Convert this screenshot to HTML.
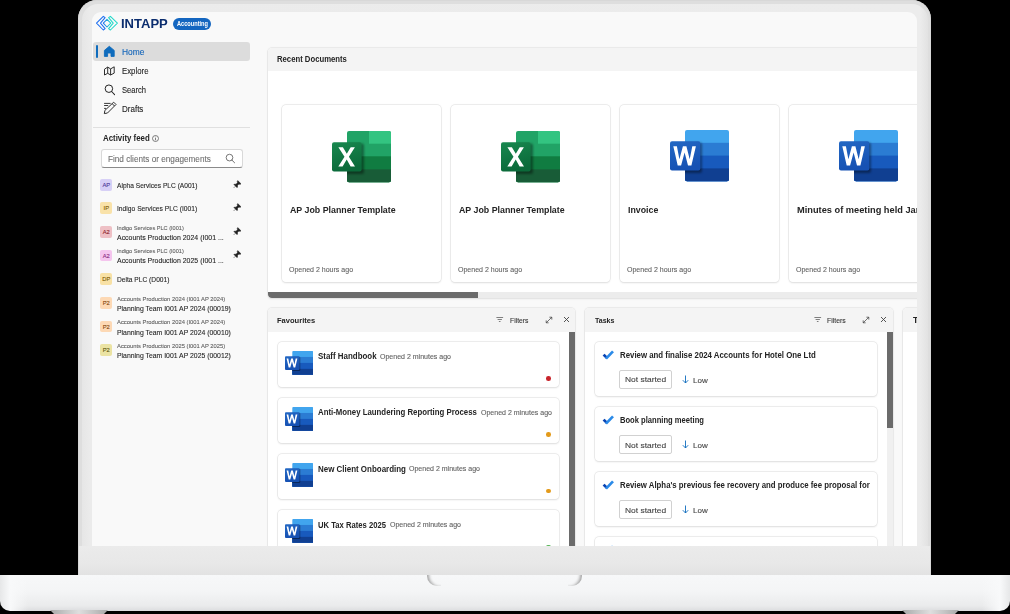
<!DOCTYPE html>
<html><head><meta charset="utf-8">
<style>
*{box-sizing:border-box;margin:0;padding:0}
html,body{width:1010px;height:614px;overflow:hidden;background:#000}
body{position:relative;font-family:"Liberation Sans",sans-serif}
.a{position:absolute}
.t{position:absolute;white-space:nowrap;line-height:20px;height:20px;transform-origin:0 0}
#lid{left:78px;top:0px;width:853px;height:575px;border-radius:19px 19px 0 0;background:#dedede;box-shadow:inset 0 0 0 1px #d8d8d8}
#lidin{left:81.5px;top:3.5px;width:846px;height:571.5px;border-radius:16px 16px 0 0;background:linear-gradient(90deg,#e6e6e6,#ebebeb 8px,#ececec 838px,#e2e2e2 846px)}
#chin{left:79px;top:546px;width:851px;height:29px;background:linear-gradient(#ebebeb,#e8e8e8 60%,#e2e2e2)}
#screen{left:92px;top:12px;width:825px;height:534px;border-radius:9px 9px 0 0;overflow:hidden;background:#f9f9f9}
#s{position:absolute;left:-92px;top:-12px;width:1010px;height:614px}
#base{left:0;top:575px;width:1010px;height:35.5px;border-radius:0 0 10px 10px;background:linear-gradient(90deg,#e6e7e8 0px,#f8f9fa 10px,rgba(248,249,250,0) 28px,rgba(248,249,250,0) 982px,#f8f9fa 1000px,#e6e7e8 1010px),linear-gradient(#f7f8f9 0%,#f4f5f6 45%,#eaebec 85%,#dcdddf 100%)}
#baseL{display:none}
#notch{left:427px;top:575px;width:14px;height:11px;border-radius:0 0 0 10px;box-shadow:inset 4px -1px 3px -2px #a8a8a8}
#notch2{left:568px;top:575px;width:14px;height:11px;border-radius:0 0 10px 0;box-shadow:inset -4px -1px 3px -2px #a8a8a8}
.foot{top:610px;height:4px;background:linear-gradient(90deg,#a8a8a8,#c4c4c4 25%,#dedede 50%,#c4c4c4 75%,#a8a8a8);clip-path:polygon(0 0,100% 0,calc(100% - 4px) 100%,4px 100%)}
.panel{position:absolute;background:#fff;border-radius:4px;box-shadow:0 0 0 0.6px #e2e2e2,0 0.5px 2px rgba(0,0,0,.1);overflow:hidden}
.ph{position:absolute;left:0;top:0;right:0;background:#f4f4f4}
.card{position:absolute;background:#fff;border-radius:4px;box-shadow:0 0 0 0.6px #e2e2e2,0 0.6px 2px rgba(0,0,0,.13)}
.sb{position:absolute;background:#6b6b6b}
.av{position:absolute;left:100.4px;width:11.8px;height:11.8px;border-radius:2px;font-size:5.8px;line-height:13.6px;text-align:center;letter-spacing:-0.05px;font-weight:400;-webkit-text-stroke:0.1px currentColor}
.pill{position:absolute;left:619.4px;width:52.6px;height:18.4px;border:1px solid #d1d1d1;border-radius:2px;background:#fff}
</style></head><body>
<div id="lid" class="a"></div>
<div id="lidin" class="a"></div>
<div id="chin" class="a"></div>
<div id="base" class="a"></div>
<div id="baseL" class="a"></div>
<div id="notch" class="a"></div><div id="notch2" class="a"></div>
<div class="a foot" style="left:50px;width:58px"></div>
<div class="a foot" style="left:902px;width:57px"></div>

<div id="screen" class="a"><div id="s">
<!-- logo -->
<svg class="a" style="left:94px;top:14px" width="26" height="19" viewBox="0 0 26 19">
<defs><linearGradient id="lg2" x1="0" y1="0" x2="1" y2="0"><stop offset="0" stop-color="#1f6ff0"/><stop offset="1" stop-color="#22e0c8"/></linearGradient></defs>
<path d="M9.3 2.3 L2.5 9.1 L9.3 16 L11.1 14.6 L6.5 9.1 L11.1 3.7 Z" fill="none" stroke="#1f6ff0" stroke-width="1.05" stroke-linejoin="round"/>
<path d="M16.4 2.3 L23.4 9.1 L16.4 16 L14.6 14.6 L19.2 9.1 L14.6 3.7 Z" fill="none" stroke="#22d8c8" stroke-width="1.05" stroke-linejoin="round"/>
<path d="M13 5.4 L16.8 9.2 L13 13 L9.3 9.2 Z" fill="none" stroke="url(#lg2)" stroke-width="1.05" stroke-linejoin="round"/>
</svg>
<div class="a" style="left:172.9px;top:18px;width:38px;height:11.6px;border-radius:6px;background:#1466c0"></div>
<!-- nav -->
<div class="a" style="left:93.2px;top:42.4px;width:156.7px;height:18.2px;border-radius:3px;background:#dcdcdc"></div>
<div class="a" style="left:95.9px;top:44.8px;width:2.1px;height:13.7px;border-radius:1px;background:#0f6cbd"></div>
<svg class="a" style="left:103px;top:45px" width="13" height="13" viewBox="0 0 13 13"><path d="M6.3 1.3 L11.2 5.4 V11.4 H8 V8 H4.6 V11.4 H1.4 V5.4 Z" fill="#0f6cbd" stroke="#0f6cbd" stroke-width="0.9" stroke-linejoin="round"/></svg>
<svg class="a" style="left:102.6px;top:65.5px" width="13" height="11" viewBox="0 0 13 11"><path d="M1.5 3.2 L4.7 1.1 L7.6 2.9 L11.2 0.8 V7.1 L7.6 9 L4.7 7.3 L1.5 9 Z M4.7 1.1 V7.3 M7.6 2.9 V9" fill="none" stroke="#242424" stroke-width="0.95" stroke-linejoin="round"/></svg>
<svg class="a" style="left:103.5px;top:83.5px" width="12" height="12" viewBox="0 0 12 12"><circle cx="4.9" cy="4.7" r="3.75" fill="none" stroke="#242424" stroke-width="1"/><path d="M7.6 7.5 L10.6 10.6" stroke="#242424" stroke-width="1.05" stroke-linecap="round"/></svg>
<svg class="a" style="left:103px;top:101px" width="14" height="14" viewBox="0 0 14 14"><path d="M1.1 2.4 H7.6 M1.1 4.5 H5.2 M1.1 7.4 H3" stroke="#242424" stroke-width="0.9"/><path d="M10.7 1.2 L13 3.5 L4.5 12 L1.3 12.6 L1.9 9.4 Z M9.2 2.7 L11.5 5" fill="none" stroke="#242424" stroke-width="0.95" stroke-linejoin="round"/></svg>
<div class="a" style="left:93.3px;top:127px;width:156.4px;height:1px;background:#e0e0e0"></div>
<svg class="a" style="left:152.3px;top:134.9px" width="7" height="7" viewBox="0 0 7 7"><circle cx="3.5" cy="3.5" r="3" fill="none" stroke="#555" stroke-width="0.75"/><path d="M3.5 3 V5.3" stroke="#555" stroke-width="0.75"/><circle cx="3.5" cy="2.0" r="0.45" fill="#555"/></svg>
<!-- search box -->
<div class="a" style="left:100.7px;top:149px;width:142.2px;height:18.8px;background:#fff;border:1px solid #d9d9d9;border-bottom:1.2px solid #8a8a8a;border-radius:3px"></div>
<svg class="a" style="left:225px;top:153px" width="11" height="11" viewBox="0 0 11 11"><circle cx="4.5" cy="4.6" r="3.35" fill="none" stroke="#555" stroke-width="0.8"/><path d="M6.9 7.1 L9.6 9.8" stroke="#555" stroke-width="0.85" stroke-linecap="round"/></svg>
<!-- avatars -->
<div class="av" style="top:178.8px;background:#d7d0f6;color:#4b3796">AP</div>
<div class="av" style="top:202.3px;background:#f9e2a9;color:#7d5a00">IP</div>
<div class="av" style="top:226.2px;background:#eec0c5;color:#8e1f2b">A2</div>
<div class="av" style="top:249.7px;background:#f5c5ee;color:#8a2a7e">A2</div>
<div class="av" style="top:273.2px;background:#f8e1a5;color:#7d5a00">DP</div>
<div class="av" style="top:297.2px;background:#fdd9b5;color:#87480c">P2</div>
<div class="av" style="top:320.5px;background:#fdd9b5;color:#87480c">P2</div>
<div class="av" style="top:344px;background:#ebe3a3;color:#5f5a12">P2</div>
<!-- pins -->
<svg class="a pin" style="left:232.9px;top:179.6px" width="8.6" height="8.6" viewBox="0 0 9 9"><path d="M5 0.6 L8.4 4 L7.4 4.6 L6.2 4.3 L4.6 5.9 L4.8 7.4 L4.2 8 L1 4.8 L1.6 4.2 L3.1 4.4 L4.7 2.8 L4.4 1.6 Z M2.4 6.6 L0.6 8.4" fill="#242424" stroke="#242424" stroke-width="0.5" stroke-linejoin="round"/></svg>
<svg class="a pin" style="left:232.9px;top:203.1px" width="8.6" height="8.6" viewBox="0 0 9 9"><path d="M5 0.6 L8.4 4 L7.4 4.6 L6.2 4.3 L4.6 5.9 L4.8 7.4 L4.2 8 L1 4.8 L1.6 4.2 L3.1 4.4 L4.7 2.8 L4.4 1.6 Z M2.4 6.6 L0.6 8.4" fill="#242424" stroke="#242424" stroke-width="0.5" stroke-linejoin="round"/></svg>
<svg class="a pin" style="left:232.9px;top:226.7px" width="8.6" height="8.6" viewBox="0 0 9 9"><path d="M5 0.6 L8.4 4 L7.4 4.6 L6.2 4.3 L4.6 5.9 L4.8 7.4 L4.2 8 L1 4.8 L1.6 4.2 L3.1 4.4 L4.7 2.8 L4.4 1.6 Z M2.4 6.6 L0.6 8.4" fill="#242424" stroke="#242424" stroke-width="0.5" stroke-linejoin="round"/></svg>
<svg class="a pin" style="left:232.9px;top:250.3px" width="8.6" height="8.6" viewBox="0 0 9 9"><path d="M5 0.6 L8.4 4 L7.4 4.6 L6.2 4.3 L4.6 5.9 L4.8 7.4 L4.2 8 L1 4.8 L1.6 4.2 L3.1 4.4 L4.7 2.8 L4.4 1.6 Z M2.4 6.6 L0.6 8.4" fill="#242424" stroke="#242424" stroke-width="0.5" stroke-linejoin="round"/></svg>

<!-- Recent documents panel -->
<div class="panel" style="left:267.5px;top:47.5px;width:700px;height:250.2px">
  <div class="ph" style="height:23.2px"></div>
  <div class="a" style="left:0;top:244.6px;width:700px;height:5.6px;background:#ececec"></div>
  <div class="a" style="left:0;top:244.6px;width:210.2px;height:5.6px;background:#6b6b6b;border-radius:0 0 0 3px"></div>
</div>
<div class="card" style="left:282px;top:104.6px;width:159px;height:177px"></div>
<div class="card" style="left:451px;top:104.6px;width:159px;height:177px"></div>
<div class="card" style="left:620px;top:104.6px;width:159px;height:177px"></div>
<div class="card" style="left:789px;top:104.6px;width:159px;height:177px"></div>

<!-- Favourites -->
<div class="panel" style="left:267.5px;top:308px;width:307.5px;height:260px">
  <div class="ph" style="height:23.8px"></div>
  <div class="sb" style="left:301.5px;top:24px;width:5.7px;height:240px"></div>
</div>
<div class="card" style="left:277.5px;top:341.5px;width:281.7px;height:45.6px"></div>
<div class="card" style="left:277.5px;top:397.7px;width:281.7px;height:45.6px"></div>
<div class="card" style="left:277.5px;top:453.9px;width:281.7px;height:45.6px"></div>
<div class="card" style="left:277.5px;top:510.1px;width:281.7px;height:45.6px"></div>

<!-- Tasks -->
<div class="panel" style="left:585.3px;top:308px;width:307.7px;height:260px">
  <div class="ph" style="height:23.8px"></div>
  <div class="a" style="left:302px;top:24px;width:5.7px;height:240px;background:#f0f0f0"></div>
  <div class="sb" style="left:302px;top:24px;width:5.7px;height:95.7px"></div>
</div>
<div class="card" style="left:595.2px;top:341.6px;width:282.1px;height:54.6px"></div>
<div class="card" style="left:595.2px;top:406.6px;width:282.1px;height:54.6px"></div>
<div class="card" style="left:595.2px;top:471.7px;width:282.1px;height:54.6px"></div>
<div class="card" style="left:595.2px;top:536.7px;width:282.1px;height:54.6px"></div>
<div class="pill" style="top:370.3px"></div>
<div class="pill" style="top:435.3px"></div>
<div class="pill" style="top:500.4px"></div>

<!-- third panel -->
<div class="panel" style="left:902.5px;top:308px;width:100px;height:260px">
  <div class="ph" style="height:23.8px"></div>
</div>

<svg width="0" height="0" style="position:absolute">
<defs>
<filter id="fsh" x="-30%" y="-30%" width="160%" height="160%"><feGaussianBlur stdDeviation="1.2"/></filter>
<linearGradient id="xg" x1="0" y1="0" x2="0.3" y2="1"><stop offset="0" stop-color="#18884f"/><stop offset="1" stop-color="#0b6a3a"/></linearGradient>
<linearGradient id="wg" x1="0" y1="0" x2="0.3" y2="1"><stop offset="0" stop-color="#2368c4"/><stop offset="1" stop-color="#1651b3"/></linearGradient>
<clipPath id="xbk"><rect x="15" y="0" width="44" height="51.2" rx="2"/></clipPath>
<symbol id="xl" viewBox="0 0 60 52">
 <g clip-path="url(#xbk)">
  <rect x="15" y="0" width="44" height="52" fill="#21a366"/>
  <rect x="37" y="0" width="22" height="12.7" fill="#33c481"/>
  <rect x="15" y="25.3" width="44" height="27" fill="#107c41"/>
  <rect x="15" y="38.4" width="44" height="14" fill="#185c37"/>
  <rect x="1.5" y="12.5" width="30.5" height="30.5" rx="2" fill="#000" opacity="0.38" filter="url(#fsh)"/>
 </g>
 <rect x="0" y="11.2" width="29.6" height="29.4" rx="2" fill="url(#xg)"/>
 <path d="M6.4 16.2 H10.9 L14.8 22.8 L18.7 16.2 H22.9 L16.9 25.8 L23 35.4 H18.6 L14.7 28.6 L10.6 35.4 H6.3 L12.5 25.8 Z" fill="#fff"/>
</symbol>
<symbol id="wd" viewBox="0 0 60 52">
 <g clip-path="url(#xbk)">
  <rect x="15" y="0" width="44" height="52" fill="#41a5ee"/>
  <rect x="15" y="12.8" width="44" height="40" fill="#2b7cd3"/>
  <rect x="15" y="25.6" width="44" height="27" fill="#185abd"/>
  <rect x="15" y="38.4" width="44" height="14" fill="#103f91"/>
  <rect x="1.5" y="12.5" width="30.5" height="30.5" rx="2" fill="#000" opacity="0.38" filter="url(#fsh)"/>
 </g>
 <rect x="0" y="11.2" width="30.3" height="29.4" rx="2" fill="url(#wg)"/>
 <path d="M3.3 16.2 H6.9 L9.4 29.2 L12.9 16.2 H16.4 L19.7 29.2 L22.3 16.2 H25.9 L21.4 35.4 H18 L14.6 22.6 L11.1 35.4 H7.7 Z" fill="#fff"/>
</symbol>
<symbol id="chk" viewBox="0 0 12 10">
 <path d="M1.6 4.6 L5 8" stroke="#0a44b2" stroke-width="2.7" stroke-linecap="butt"/>
 <path d="M4 8.6 L11 1.4" stroke="#2a8ae8" stroke-width="2.7" stroke-linecap="butt"/>
</symbol>
<symbol id="flt" viewBox="0 0 8 6"><path d="M0.4 0.5 H7.1 M1.6 2.5 H5.9 M2.9 4.5 H4.5" stroke="#616161" stroke-width="0.8"/></symbol>
<symbol id="exp" viewBox="0 0 8 8"><path d="M1.2 6.8 L6.8 1.2 M4.4 1.2 H6.8 V3.6 M1.2 4.4 V6.8 H3.6" fill="none" stroke="#424242" stroke-width="0.75"/></symbol>
<symbol id="cls" viewBox="0 0 7 7"><path d="M1 1 L6 6 M6 1 L1 6" stroke="#424242" stroke-width="0.9"/></symbol>
<symbol id="arr" viewBox="0 0 7 9"><path d="M3.5 0.5 V8 M0.8 5.2 L3.5 8 L6.2 5.2" fill="none" stroke="#0f6cbd" stroke-width="0.9"/></symbol>
</defs></svg>
<svg class="a" style="left:332px;top:130.5px" width="60" height="52"><use href="#xl"/></svg>
<svg class="a" style="left:501px;top:130.5px" width="60" height="52"><use href="#xl"/></svg>
<svg class="a" style="left:670px;top:130.4px" width="60" height="52"><use href="#wd"/></svg>
<svg class="a" style="left:839px;top:130.4px" width="60" height="52"><use href="#wd"/></svg>
<svg class="a" style="left:284.8px;top:350.7px" width="28.7" height="24.2" viewBox="0 0 60 52" preserveAspectRatio="none"><use href="#wd"/></svg>
<svg class="a" style="left:284.8px;top:406.9px" width="28.7" height="24.2" viewBox="0 0 60 52" preserveAspectRatio="none"><use href="#wd"/></svg>
<svg class="a" style="left:284.8px;top:463.1px" width="28.7" height="24.2" viewBox="0 0 60 52" preserveAspectRatio="none"><use href="#wd"/></svg>
<svg class="a" style="left:284.8px;top:519.3px" width="28.7" height="24.2" viewBox="0 0 60 52" preserveAspectRatio="none"><use href="#wd"/></svg>
<div class="a" style="left:546.4px;top:376.2px;width:4.6px;height:4.6px;border-radius:50%;background:#c8242b"></div>
<div class="a" style="left:546.4px;top:432.4px;width:4.6px;height:4.6px;border-radius:50%;background:#e39a1a"></div>
<div class="a" style="left:546.4px;top:488.6px;width:4.6px;height:4.6px;border-radius:50%;background:#e39a1a"></div>
<div class="a" style="left:546.4px;top:544.8px;width:4.6px;height:4.6px;border-radius:50%;background:#5cb85c"></div>
<svg class="a" style="left:602.2px;top:350px" width="12" height="10"><use href="#chk"/></svg>
<svg class="a" style="left:602.2px;top:415px" width="12" height="10"><use href="#chk"/></svg>
<svg class="a" style="left:602.2px;top:480.1px" width="12" height="10"><use href="#chk"/></svg>
<svg class="a" style="left:602.2px;top:545.1px" width="12" height="10"><use href="#chk"/></svg>
<svg class="a" style="left:496px;top:317px" width="8" height="6"><use href="#flt"/></svg>
<svg class="a" style="left:544.5px;top:315.5px" width="8" height="8"><use href="#exp"/></svg>
<svg class="a" style="left:562.5px;top:316px" width="7" height="7"><use href="#cls"/></svg>
<svg class="a" style="left:814px;top:317px" width="8" height="6"><use href="#flt"/></svg>
<svg class="a" style="left:862px;top:315.5px" width="8" height="8"><use href="#exp"/></svg>
<svg class="a" style="left:880px;top:316px" width="7" height="7"><use href="#cls"/></svg>
<svg class="a" style="left:682.3px;top:374.8px" width="7" height="9"><use href="#arr"/></svg>
<svg class="a" style="left:682.3px;top:439.8px" width="7" height="9"><use href="#arr"/></svg>
<svg class="a" style="left:682.3px;top:504.9px" width="7" height="9"><use href="#arr"/></svg>

<div class=t style="left:120.70px;top:14.14px;font-size:12.57px;transform:scaleX(1.0363);font-weight:700;color:#0b2d6e;-webkit-text-stroke:0;">INTAPP</div>
<div class=t style="left:176.50px;top:14.23px;font-size:6.83px;transform:scaleX(0.8251);font-weight:700;color:#ffffff;-webkit-text-stroke:0;">Accounting</div>
<div class=t style="left:121.90px;top:42.96px;font-size:8.20px;transform:scaleX(1.0244);font-weight:400;color:#0f62b8;-webkit-text-stroke:0.1px currentColor;">Home</div>
<div class=t style="left:121.90px;top:61.66px;font-size:8.20px;transform:scaleX(0.9534);font-weight:400;color:#242424;-webkit-text-stroke:0.1px currentColor;">Explore</div>
<div class=t style="left:121.90px;top:80.76px;font-size:8.20px;transform:scaleX(0.9278);font-weight:400;color:#242424;-webkit-text-stroke:0.1px currentColor;">Search</div>
<div class=t style="left:121.90px;top:99.66px;font-size:8.20px;transform:scaleX(0.9788);font-weight:400;color:#242424;-webkit-text-stroke:0.1px currentColor;">Drafts</div>
<div class=t style="left:103.10px;top:128.46px;font-size:8.47px;transform:scaleX(0.9271);font-weight:700;color:#242424;-webkit-text-stroke:0;">Activity feed</div>
<div class=t style="left:108.20px;top:148.72px;font-size:8.61px;transform:scaleX(0.9525);font-weight:400;color:#707070;-webkit-text-stroke:0.1px currentColor;">Find clients or engagements</div>
<div class=t style="left:117.00px;top:175.75px;font-size:7.65px;transform:scaleX(0.8654);font-weight:400;color:#242424;-webkit-text-stroke:0.1px currentColor;">Alpha Services PLC (A001)</div>
<div class=t style="left:117.00px;top:199.35px;font-size:7.65px;transform:scaleX(0.8782);font-weight:400;color:#242424;-webkit-text-stroke:0.1px currentColor;">Indigo Services PLC (I001)</div>
<div class=t style="left:117.00px;top:217.72px;font-size:6.01px;transform:scaleX(0.9312);font-weight:400;color:#616161;-webkit-text-stroke:0.1px currentColor;">Indigo Services PLC (I001)</div>
<div class=t style="left:117.00px;top:227.55px;font-size:7.65px;transform:scaleX(0.9106);font-weight:400;color:#242424;-webkit-text-stroke:0.1px currentColor;">Accounts Production 2024 (I001 ...</div>
<div class=t style="left:117.00px;top:241.22px;font-size:6.01px;transform:scaleX(0.9312);font-weight:400;color:#616161;-webkit-text-stroke:0.1px currentColor;">Indigo Services PLC (I001)</div>
<div class=t style="left:117.00px;top:251.05px;font-size:7.65px;transform:scaleX(0.9106);font-weight:400;color:#242424;-webkit-text-stroke:0.1px currentColor;">Accounts Production 2025 (I001 ...</div>
<div class=t style="left:117.00px;top:270.15px;font-size:7.65px;transform:scaleX(0.8694);font-weight:400;color:#242424;-webkit-text-stroke:0.1px currentColor;">Delta PLC (D001)</div>
<div class=t style="left:117.00px;top:288.72px;font-size:6.01px;transform:scaleX(0.9692);font-weight:400;color:#616161;-webkit-text-stroke:0.1px currentColor;">Accounts Production 2024 (I001 AP 2024)</div>
<div class=t style="left:117.00px;top:299.05px;font-size:7.65px;transform:scaleX(0.8983);font-weight:400;color:#242424;-webkit-text-stroke:0.1px currentColor;">Planning Team I001 AP 2024 (00019)</div>
<div class=t style="left:117.00px;top:312.22px;font-size:6.01px;transform:scaleX(0.9692);font-weight:400;color:#616161;-webkit-text-stroke:0.1px currentColor;">Accounts Production 2024 (I001 AP 2024)</div>
<div class=t style="left:117.00px;top:322.55px;font-size:7.65px;transform:scaleX(0.8983);font-weight:400;color:#242424;-webkit-text-stroke:0.1px currentColor;">Planning Team I001 AP 2024 (00010)</div>
<div class=t style="left:117.00px;top:335.72px;font-size:6.01px;transform:scaleX(0.9692);font-weight:400;color:#616161;-webkit-text-stroke:0.1px currentColor;">Accounts Production 2025 (I001 AP 2025)</div>
<div class=t style="left:117.00px;top:346.05px;font-size:7.65px;transform:scaleX(0.8983);font-weight:400;color:#242424;-webkit-text-stroke:0.1px currentColor;">Planning Team I001 AP 2025 (00012)</div>
<div class=t style="left:277.10px;top:49.42px;font-size:8.61px;transform:scaleX(0.8978);font-weight:700;color:#242424;-webkit-text-stroke:0;">Recent Documents</div>
<div class=t style="left:289.60px;top:200.32px;font-size:8.88px;transform:scaleX(0.9946);font-weight:700;color:#242424;-webkit-text-stroke:0;">AP Job Planner Template</div>
<div class=t style="left:289.40px;top:260.00px;font-size:7.79px;transform:scaleX(0.9027);font-weight:400;color:#616161;-webkit-text-stroke:0.1px currentColor;">Opened 2 hours ago</div>
<div class=t style="left:458.60px;top:200.32px;font-size:8.88px;transform:scaleX(0.9946);font-weight:700;color:#242424;-webkit-text-stroke:0;">AP Job Planner Template</div>
<div class=t style="left:458.40px;top:260.00px;font-size:7.79px;transform:scaleX(0.9027);font-weight:400;color:#616161;-webkit-text-stroke:0.1px currentColor;">Opened 2 hours ago</div>
<div class=t style="left:627.60px;top:200.32px;font-size:8.88px;transform:scaleX(0.9901);font-weight:700;color:#242424;-webkit-text-stroke:0;">Invoice</div>
<div class=t style="left:627.40px;top:260.00px;font-size:7.79px;transform:scaleX(0.9027);font-weight:400;color:#616161;-webkit-text-stroke:0.1px currentColor;">Opened 2 hours ago</div>
<div class=t style="left:796.60px;top:200.32px;font-size:8.88px;transform:scaleX(1.0422);font-weight:700;color:#242424;-webkit-text-stroke:0;">Minutes of meeting held January</div>
<div class=t style="left:796.40px;top:260.00px;font-size:7.79px;transform:scaleX(0.9027);font-weight:400;color:#616161;-webkit-text-stroke:0.1px currentColor;">Opened 2 hours ago</div>
<div class=t style="left:277.10px;top:311.21px;font-size:8.06px;transform:scaleX(0.9371);font-weight:700;color:#242424;-webkit-text-stroke:0;">Favourites</div>
<div class=t style="left:509.60px;top:311.10px;font-size:7.79px;transform:scaleX(0.8679);font-weight:400;color:#333333;-webkit-text-stroke:0.1px currentColor;">Filters</div>
<div class=t style="left:317.90px;top:346.11px;font-size:8.33px;transform:scaleX(0.9516);font-weight:700;color:#242424;-webkit-text-stroke:0;">Staff Handbook</div>
<div class=t style="left:379.70px;top:346.83px;font-size:6.83px;transform:scaleX(1.0272);font-weight:400;color:#616161;-webkit-text-stroke:0.1px currentColor;">Opened 2 minutes ago</div>
<div class=t style="left:317.90px;top:402.31px;font-size:8.33px;transform:scaleX(0.9382);font-weight:700;color:#242424;-webkit-text-stroke:0;">Anti-Money Laundering Reporting Process</div>
<div class=t style="left:480.80px;top:403.03px;font-size:6.83px;transform:scaleX(1.0272);font-weight:400;color:#616161;-webkit-text-stroke:0.1px currentColor;">Opened 2 minutes ago</div>
<div class=t style="left:317.90px;top:458.51px;font-size:8.33px;transform:scaleX(0.9550);font-weight:700;color:#242424;-webkit-text-stroke:0;">New Client Onboarding</div>
<div class=t style="left:409.10px;top:459.23px;font-size:6.83px;transform:scaleX(1.0272);font-weight:400;color:#616161;-webkit-text-stroke:0.1px currentColor;">Opened 2 minutes ago</div>
<div class=t style="left:317.90px;top:514.71px;font-size:8.33px;transform:scaleX(0.9193);font-weight:700;color:#242424;-webkit-text-stroke:0;">UK Tax Rates 2025</div>
<div class=t style="left:389.80px;top:515.43px;font-size:6.83px;transform:scaleX(1.0272);font-weight:400;color:#616161;-webkit-text-stroke:0.1px currentColor;">Opened 2 minutes ago</div>
<div class=t style="left:595.00px;top:311.11px;font-size:8.06px;transform:scaleX(0.8761);font-weight:700;color:#242424;-webkit-text-stroke:0;">Tasks</div>
<div class=t style="left:827.30px;top:311.10px;font-size:7.79px;transform:scaleX(0.8821);font-weight:400;color:#333333;-webkit-text-stroke:0.1px currentColor;">Filters</div>
<div class=t style="left:619.60px;top:345.17px;font-size:8.74px;transform:scaleX(0.8977);font-weight:700;color:#242424;-webkit-text-stroke:0;">Review and finalise 2024 Accounts for Hotel One Ltd</div>
<div class=t style="left:625.20px;top:370.45px;font-size:7.65px;transform:scaleX(1.1009);font-weight:400;color:#424242;-webkit-text-stroke:0.1px currentColor;">Not started</div>
<div class=t style="left:692.50px;top:370.85px;font-size:7.65px;transform:scaleX(1.0473);font-weight:400;color:#424242;-webkit-text-stroke:0.1px currentColor;">Low</div>
<div class=t style="left:619.60px;top:410.22px;font-size:8.74px;transform:scaleX(0.8689);font-weight:700;color:#242424;-webkit-text-stroke:0;">Book planning meeting</div>
<div class=t style="left:625.20px;top:435.50px;font-size:7.65px;transform:scaleX(1.1009);font-weight:400;color:#424242;-webkit-text-stroke:0.1px currentColor;">Not started</div>
<div class=t style="left:692.50px;top:435.90px;font-size:7.65px;transform:scaleX(1.0473);font-weight:400;color:#424242;-webkit-text-stroke:0.1px currentColor;">Low</div>
<div class=t style="left:619.60px;top:475.27px;font-size:8.74px;transform:scaleX(0.8938);font-weight:700;color:#242424;-webkit-text-stroke:0;">Review Alpha's previous fee recovery and produce fee proposal for</div>
<div class=t style="left:625.20px;top:500.55px;font-size:7.65px;transform:scaleX(1.1009);font-weight:400;color:#424242;-webkit-text-stroke:0.1px currentColor;">Not started</div>
<div class=t style="left:692.50px;top:500.95px;font-size:7.65px;transform:scaleX(1.0473);font-weight:400;color:#424242;-webkit-text-stroke:0.1px currentColor;">Low</div>
<div class=t style="left:912.60px;top:309.87px;font-size:8.74px;transform:scaleX(0.9913);font-weight:700;color:#242424;-webkit-text-stroke:0;">Team</div>
</div></div>
</body></html>
